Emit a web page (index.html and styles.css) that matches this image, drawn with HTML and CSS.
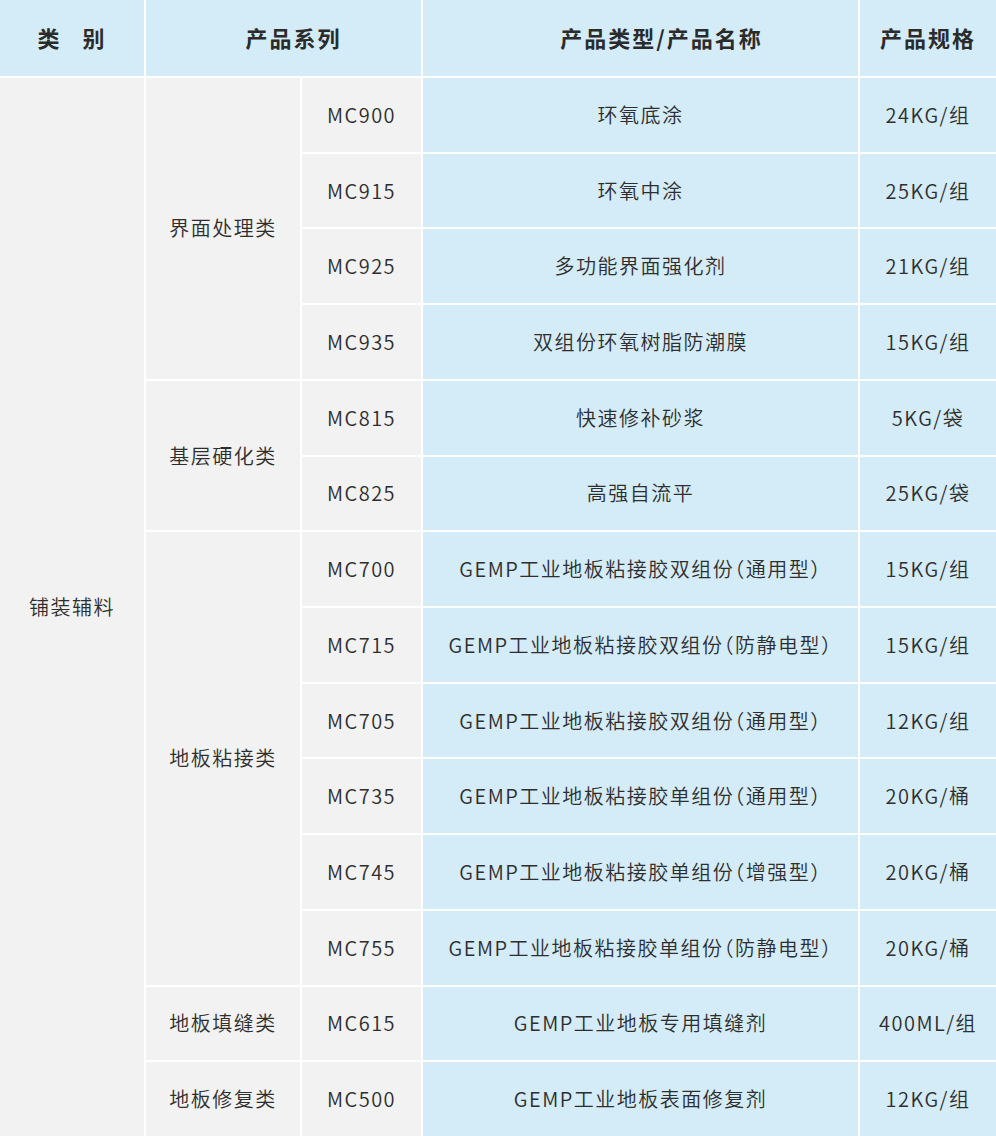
FILE: index.html
```html
<!DOCTYPE html>
<html lang="zh-CN">
<head>
<meta charset="utf-8">
<title>铺装辅料</title>
<link rel="stylesheet" href="styles.css">
</head>
<body>
<div class="table">
  <div class="cell head">类&nbsp;&nbsp;&nbsp;别</div>
  <div class="cell head span-c2 head-series">产品系列</div>
  <div class="cell head head-type">产品类型/产品名称</div>
  <div class="cell head">产品规格</div>

  <div class="cell gray span-r14">铺装辅料</div>
  <div class="cell gray span-r4">界面处理类</div>
  <div class="cell gray code">MC900</div>
  <div class="cell blue">环氧底涂</div>
  <div class="cell blue">24KG/组</div>

  <div class="cell gray code">MC915</div>
  <div class="cell blue">环氧中涂</div>
  <div class="cell blue">25KG/组</div>

  <div class="cell gray code">MC925</div>
  <div class="cell blue">多功能界面强化剂</div>
  <div class="cell blue">21KG/组</div>

  <div class="cell gray code">MC935</div>
  <div class="cell blue">双组份环氧树脂防潮膜</div>
  <div class="cell blue">15KG/组</div>

  <div class="cell gray span-r2">基层硬化类</div>
  <div class="cell gray code">MC815</div>
  <div class="cell blue">快速修补砂浆</div>
  <div class="cell blue">5KG/袋</div>

  <div class="cell gray code">MC825</div>
  <div class="cell blue">高强自流平</div>
  <div class="cell blue">25KG/袋</div>

  <div class="cell gray span-r6">地板粘接类</div>
  <div class="cell gray code">MC700</div>
  <div class="cell blue">GEMP工业地板粘接胶双组份（通用型）</div>
  <div class="cell blue">15KG/组</div>

  <div class="cell gray code">MC715</div>
  <div class="cell blue">GEMP工业地板粘接胶双组份（防静电型）</div>
  <div class="cell blue">15KG/组</div>

  <div class="cell gray code">MC705</div>
  <div class="cell blue">GEMP工业地板粘接胶双组份（通用型）</div>
  <div class="cell blue">12KG/组</div>

  <div class="cell gray code">MC735</div>
  <div class="cell blue">GEMP工业地板粘接胶单组份（通用型）</div>
  <div class="cell blue">20KG/桶</div>

  <div class="cell gray code">MC745</div>
  <div class="cell blue">GEMP工业地板粘接胶单组份（增强型）</div>
  <div class="cell blue">20KG/桶</div>

  <div class="cell gray code">MC755</div>
  <div class="cell blue">GEMP工业地板粘接胶单组份（防静电型）</div>
  <div class="cell blue">20KG/桶</div>

  <div class="cell gray">地板填缝类</div>
  <div class="cell gray code">MC615</div>
  <div class="cell blue">GEMP工业地板专用填缝剂</div>
  <div class="cell blue">400ML/组</div>

  <div class="cell gray">地板修复类</div>
  <div class="cell gray code">MC500</div>
  <div class="cell blue">GEMP工业地板表面修复剂</div>
  <div class="cell blue">12KG/组</div>
</div>
</body>
</html>
```

FILE: styles.css
```css
html, body {
  margin: 0;
  padding: 0;
  background: #ffffff;
}

.table {
  width: 996px;
  height: 1136px;
  display: grid;
  grid-template-columns: 144px 154px 119px 435px 136px;
  grid-template-rows: 76px repeat(14, 1fr);
  gap: 2px;
  background: #ffffff;
  font-family: "Noto Sans CJK SC", "Noto Sans", sans-serif;
  color: #2e2e2e;
}

.cell {
  display: flex;
  align-items: center;
  justify-content: center;
  padding-bottom: 1px;
  font-size: 20px;
  font-weight: 350;
  letter-spacing: 1.5px;
  white-space: nowrap;
  overflow: hidden;
  font-feature-settings: "halt" 1;
}

.head {
  padding-bottom: 2px;
  background: #d4ebf8;
  font-size: 22px;
  font-weight: 700;
  letter-spacing: 2px;
  color: #2b2b2b;
}

.head-series {
  padding-left: 20px;
}

.head-type {
  padding-left: 42px;
}

.gray {
  background: #f2f2f2;
}

.blue {
  background: #d4ebf8;
}

.span-c2 { grid-column: span 2; }
.span-r2 { grid-row: span 2; }
.span-r4 { grid-row: span 4; }
.span-r6 { grid-row: span 6; }
.span-r14 { grid-row: span 14; }
```
